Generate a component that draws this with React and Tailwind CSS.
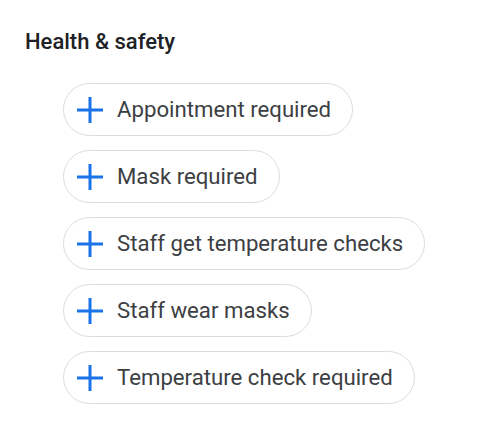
const items = [
  "Appointment required",
  "Mask required",
  "Staff get temperature checks",
  "Staff wear masks",
  "Temperature check required",
];

function PlusIcon() {
  return (
    <svg width="28" height="28" viewBox="0 0 28 28" className="shrink-0">
      <path d="M14 1v26M1 14h26" stroke="#1a73e8" strokeWidth="3" fill="none" />
    </svg>
  );
}

export default function App() {
  return (
    <div className="w-[489px] h-[423px] bg-white font-['Roboto',sans-serif]">
      <div className="pt-[29px] pl-[25px]">
        <h2 className="text-[22px] leading-[26px] font-medium text-[#202124]">Health &amp; safety</h2>
      </div>
      <div className="flex flex-col items-start gap-[14px] pl-[63px] pt-[28px]">
        {items.map((item) => (
          <div
            key={item}
            className="flex items-center h-[53px] pl-[12px] pr-[21px] border-[1.5px] border-[#dadce0] rounded-full"
          >
            <PlusIcon />
            <span className="ml-[13px] text-[22.2px] text-[#3c4043]">{item}</span>
          </div>
        ))}
      </div>
    </div>
  );
}
